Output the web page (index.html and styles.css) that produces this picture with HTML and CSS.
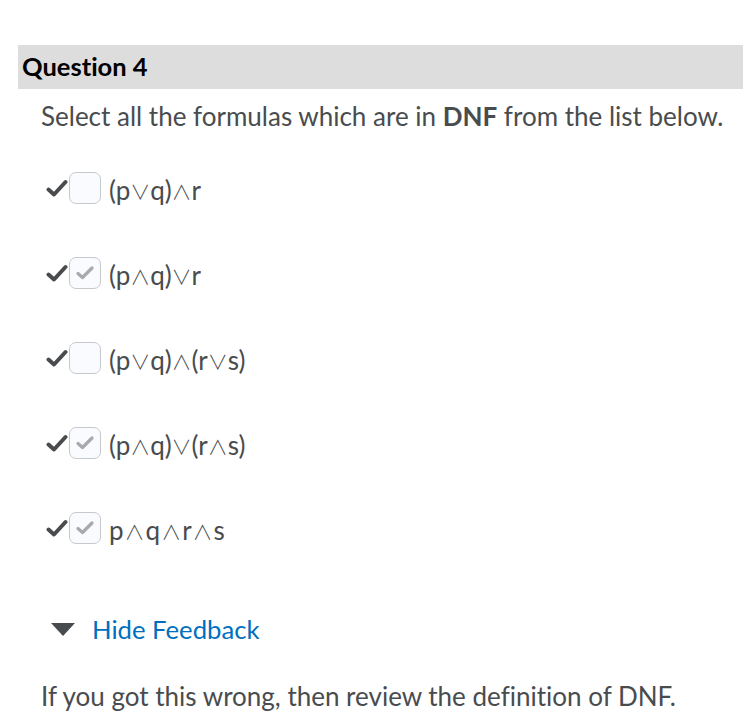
FILE: index.html
```html
<!DOCTYPE html>
<html>
<head>
<meta charset="utf-8">
<link rel="stylesheet" href="styles.css">
</head>
<body>
<div class="page">
  <div class="q-header"><h2 class="q-title">Question 4</h2></div>
  <p class="prompt">Select all the formulas which are in <strong>DNF</strong> from the list below.</p>
  <ul class="options">
    <li class="option">
      <svg class="mark" width="22" height="18" viewBox="0 0 22 18"><path d="M2.5 10.5 L8 15.5 L19.5 3" fill="none" stroke="#494c4e" stroke-width="4" stroke-linecap="round" stroke-linejoin="round"/></svg>
      <span class="box"></span>
      <span class="label">(p<span class="op">∨</span>q)<span class="op">∧</span>r</span>
    </li>
    <li class="option">
      <svg class="mark" width="22" height="18" viewBox="0 0 22 18"><path d="M2.5 10.5 L8 15.5 L19.5 3" fill="none" stroke="#494c4e" stroke-width="4" stroke-linecap="round" stroke-linejoin="round"/></svg>
      <span class="box checked"><svg width="20" height="16" viewBox="0 0 20 16"><path d="M3 8.5 L7.5 12.5 L17 3" fill="none" stroke="#a7a9ac" stroke-width="3.2" stroke-linecap="round" stroke-linejoin="round"/></svg></span>
      <span class="label">(p<span class="op">∧</span>q)<span class="op">∨</span>r</span>
    </li>
    <li class="option">
      <svg class="mark" width="22" height="18" viewBox="0 0 22 18"><path d="M2.5 10.5 L8 15.5 L19.5 3" fill="none" stroke="#494c4e" stroke-width="4" stroke-linecap="round" stroke-linejoin="round"/></svg>
      <span class="box"></span>
      <span class="label">(p<span class="op">∨</span>q)<span class="op">∧</span>(r<span class="op">∨</span>s)</span>
    </li>
    <li class="option">
      <svg class="mark" width="22" height="18" viewBox="0 0 22 18"><path d="M2.5 10.5 L8 15.5 L19.5 3" fill="none" stroke="#494c4e" stroke-width="4" stroke-linecap="round" stroke-linejoin="round"/></svg>
      <span class="box checked"><svg width="20" height="16" viewBox="0 0 20 16"><path d="M3 8.5 L7.5 12.5 L17 3" fill="none" stroke="#a7a9ac" stroke-width="3.2" stroke-linecap="round" stroke-linejoin="round"/></svg></span>
      <span class="label">(p<span class="op">∧</span>q)<span class="op">∨</span>(r<span class="op">∧</span>s)</span>
    </li>
    <li class="option">
      <svg class="mark" width="22" height="18" viewBox="0 0 22 18"><path d="M2.5 10.5 L8 15.5 L19.5 3" fill="none" stroke="#494c4e" stroke-width="4" stroke-linecap="round" stroke-linejoin="round"/></svg>
      <span class="box checked"><svg width="20" height="16" viewBox="0 0 20 16"><path d="M3 8.5 L7.5 12.5 L17 3" fill="none" stroke="#a7a9ac" stroke-width="3.2" stroke-linecap="round" stroke-linejoin="round"/></svg></span>
      <span class="label spaced">p<span class="op">∧</span>q<span class="op">∧</span>r<span class="op">∧</span>s</span>
    </li>
  </ul>
  <div class="feedback-toggle">
    <svg class="caret" width="24" height="13" viewBox="0 0 24 13"><path d="M0 0 H24 L12 13 Z" fill="#494c4e"/></svg>
    <a class="toggle-link" href="#">Hide Feedback</a>
  </div>
  <p class="feedback">If you got this wrong, then review the definition of DNF.</p>
</div>
</body>
</html>
```

FILE: styles.css
```css
* { box-sizing: border-box; }
html, body { margin: 0; padding: 0; background: #fff; }
body {
  font-family: Lato, "Noto Sans", sans-serif;
  color: #494c4e;
  font-variant-ligatures: none;
}
.page {
  padding-top: 45px;
}
.q-header {
  margin-left: 18px;
  height: 44px;
  background: #dddddd;
  display: flex;
  align-items: center;
  padding-left: 4px;
  padding-bottom: 3px;
}
.q-title {
  margin: 0;
  font-size: 25.5px;
  font-weight: 700;
  color: #000;
}
.prompt {
  margin: 12px 0 0 41px;
  font-size: 26px;
  line-height: 30px;
}
.prompt strong { font-weight: 700; }
.options {
  list-style: none;
  margin: 41px 0 0 0;
  padding: 0 0 0 46px;
  display: flex;
  flex-direction: column;
  gap: 53px;
}
.option {
  display: flex;
  align-items: center;
  height: 32px;
}
.mark { flex: none; margin-right: 1px; }
.box {
  flex: none;
  width: 32px;
  height: 32px;
  border: 1px solid #c6c9cc;
  border-radius: 7px;
  background: #f9fbff;
  display: flex;
  align-items: center;
  justify-content: center;
}
.label {
  margin-left: 8px;
  font-size: 26px;
  line-height: 32px;
  padding-top: 4px;
  white-space: nowrap;
}
.op {
  font-family: "Noto Sans CJK JP", "DejaVu Sans", sans-serif;
  font-weight: 300;
  font-size: 20px;
  line-height: 1;
}
.spaced { letter-spacing: 1px; }
.feedback-toggle {
  display: flex;
  align-items: center;
  margin: 70px 0 0 51px;
  height: 30px;
}
.caret { flex: none; margin-right: 17px; }
.toggle-link {
  color: #006fbf;
  text-decoration: none;
  font-size: 25.7px;
}
.feedback {
  margin: 37px 0 0 41px;
  font-size: 26px;
  line-height: 30px;
}
```
